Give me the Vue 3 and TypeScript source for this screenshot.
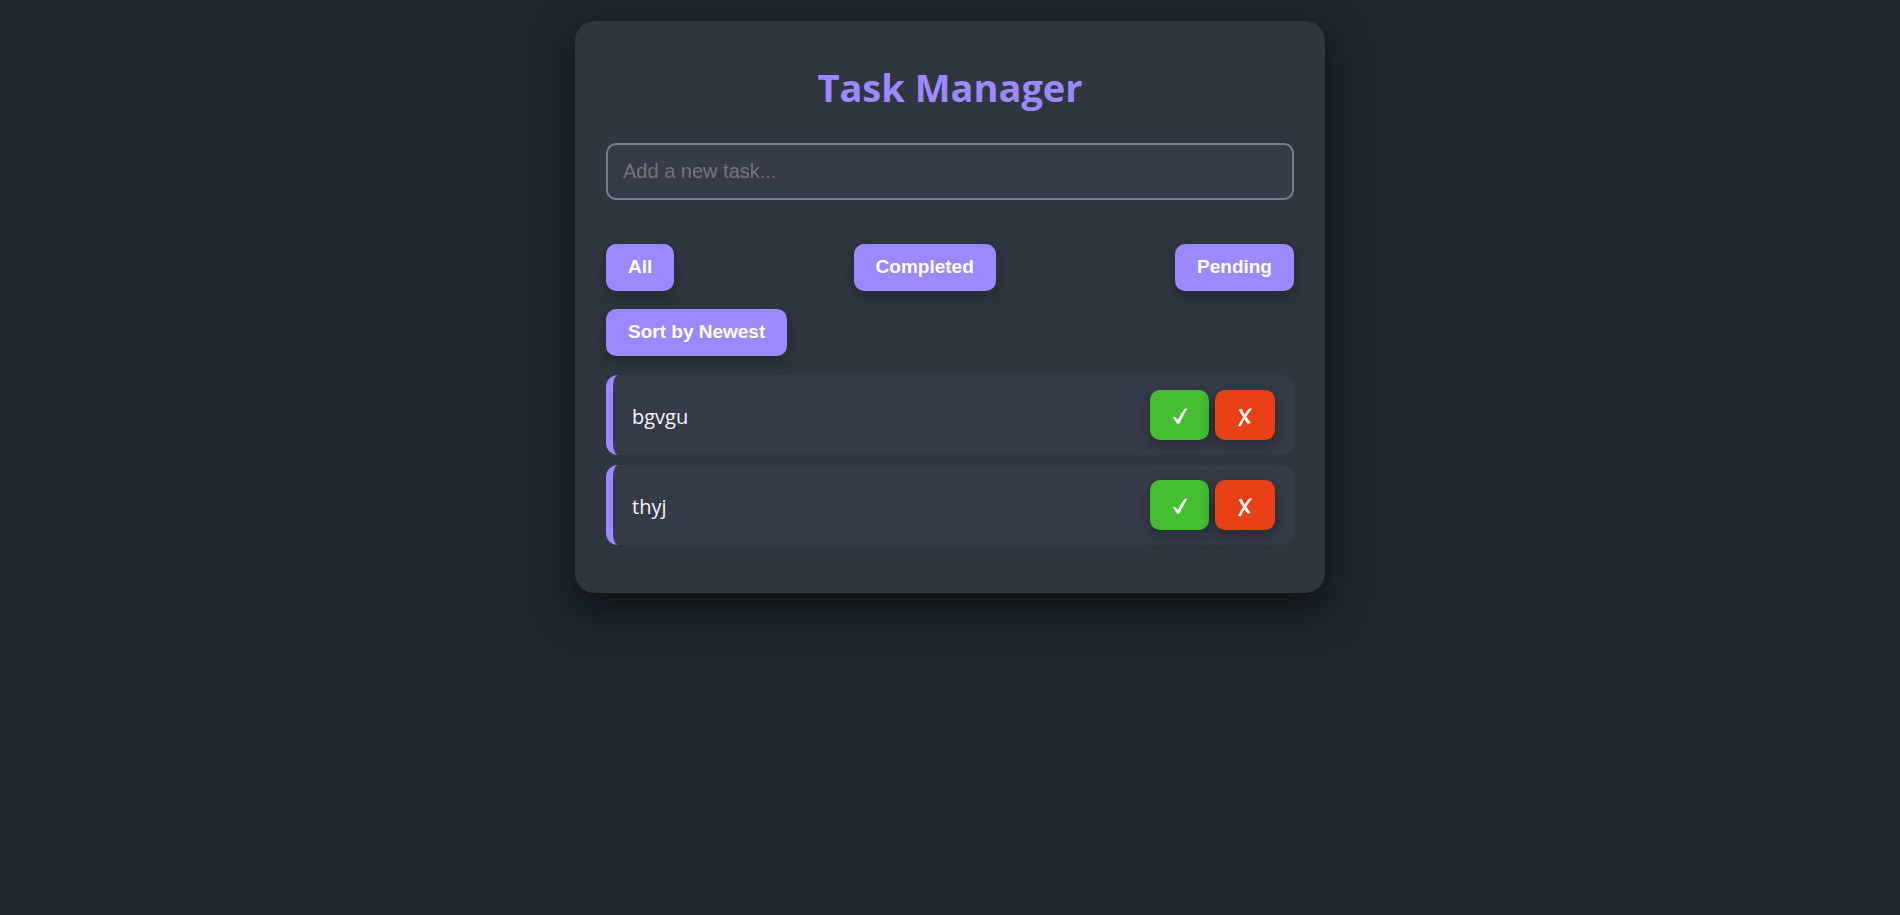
<script setup lang="ts">
import { computed, ref } from 'vue'

interface Task {
  id: number
  text: string
  done: boolean
}

type Filter = 'all' | 'completed' | 'pending'

const tasks = ref<Task[]>([
  { id: 1, text: 'bgvgu', done: false },
  { id: 2, text: 'thyj', done: false },
])
const draft = ref('')
const filter = ref<Filter>('all')
const newestFirst = ref(false)

const filters: { key: Filter; label: string }[] = [
  { key: 'all', label: 'All' },
  { key: 'completed', label: 'Completed' },
  { key: 'pending', label: 'Pending' },
]

const visibleTasks = computed(() => {
  const list = tasks.value.filter(
    (t) => filter.value === 'all' || t.done === (filter.value === 'completed'),
  )
  return newestFirst.value ? list.reverse() : list
})

function addTask() {
  const text = draft.value.trim()
  if (!text) return
  tasks.value.push({ id: Date.now(), text, done: false })
  draft.value = ''
}

function removeTask(id: number) {
  tasks.value = tasks.value.filter((t) => t.id !== id)
}
</script>

<template>
  <div class="page">
    <main class="card">
      <h1 class="title">Task Manager</h1>
      <form @submit.prevent="addTask">
        <input
          v-model="draft"
          class="task-input"
          type="text"
          aria-label="Add a new task"
          placeholder="Add a new task..."
        />
      </form>
      <div class="filters">
        <button v-for="f in filters" :key="f.key" type="button" class="btn" @click="filter = f.key">
          {{ f.label }}
        </button>
      </div>
      <button type="button" class="btn sort" @click="newestFirst = !newestFirst">Sort by Newest</button>
      <ul class="list">
        <li v-for="task in visibleTasks" :key="task.id" class="item">
          <span class="label" :class="{ done: task.done }">{{ task.text }}</span>
          <div class="actions">
            <button type="button" class="action complete" aria-label="Complete" @click="task.done = !task.done">
              <svg class="icon" viewBox="0 0 20 20" aria-hidden="true">
                <path d="M2.8 10.6 Q4 9.4 5.4 10.2 Q6.8 11.4 7.8 13 Q10.6 6.6 14.6 2 L17.4 1.5 Q13.2 8.2 9.6 16.400 L7 16.800 Q5.200 13.200 2.800 10.600 Z" />
              </svg>
            </button>
            <button type="button" class="action remove" aria-label="Delete" @click="removeTask(task.id)">
              <svg class="icon" viewBox="0 0 20 20" aria-hidden="true">
                <path d="M3.700 2.700 L6.700 1.700 Q8 4.600 9.700 7.400 Q12 4.200 14.200 1.600 L17.200 1.600 Q14 5.400 11.300 9.600 Q13.300 12.800 15.700 15.800 L12.900 17.100 Q10.900 14.800 9.500 12.200 Q7.500 15.500 6 18.900 L3 19.300 Q5.200 14.400 8.100 9.900 Q5.600 6.400 3.700 2.700 Z" />
              </svg>
            </button>
          </div>
        </li>
      </ul>
    </main>
  </div>
</template>

<style>
body {
  background: #1e272e;
}
</style>

<style scoped>
.page {
  box-sizing: border-box;
  min-height: 100vh;
  padding: 21px 0;
  background: #1e272e;
}
.card {
  box-sizing: border-box;
  max-width: 750px;
  margin: 0 auto;
  padding: 39px 31px 48px;
  border-radius: 20px;
  background: #2f3640;
  box-shadow: 0 14px 40px rgba(0, 0, 0, 0.6);
  color: #f5f6fa;
  font-family: "Open Sans", "Noto Sans", sans-serif;
}
.title {
  margin: 0 0 29px;
  color: #9c88ff;
  font-size: 38px;
  line-height: 54px;
  text-align: center;
}
.task-input {
  display: block;
  box-sizing: border-box;
  width: 100%;
  height: 57px;
  padding: 0 15px;
  border: 2px solid #718093;
  border-radius: 10px;
  background: #353b48;
  color: #f5f6fa;
  font-family: "Liberation Sans", Arial, sans-serif;
  font-size: 20px;
}
.task-input::placeholder {
  color: #757575;
}
.filters {
  display: flex;
  justify-content: space-between;
  margin: 44px 0 18px;
}
.btn {
  height: 47px;
  padding: 0 22px 2px;
  font-family: "Liberation Sans", Arial, sans-serif;
  font-size: 19px;
  font-weight: 700;
  background: #9c88ff;
}
.btn,
.action {
  border: 0;
  border-radius: 10px;
  color: #fff;
  box-shadow: 0 5px 15px rgba(0, 0, 0, 0.3);
  cursor: pointer;
}
.sort {
  display: block;
}
.list {
  display: flex;
  flex-direction: column;
  gap: 10px;
  margin: 19px 0 0;
  padding: 0;
  list-style: none;
}
.item {
  display: flex;
  align-items: center;
  justify-content: space-between;
  padding: 15px 19px;
  border-left: 7px solid #9c88ff;
  border-radius: 12px;
  background: #353b48;
}
.label {
  padding-top: 3px;
  font-size: 20px;
  line-height: 28px;
}
.done {
  text-decoration: line-through;
}
.actions {
  display: flex;
  gap: 6px;
}
.action {
  display: flex;
  align-items: center;
  justify-content: center;
  width: 60px;
  height: 50px;
  padding: 3px 0 0;
}
.complete {
  width: 59px;
  background: #44bd32;
}
.remove {
  background: #e84118;
}
.icon {
  width: 20px;
  height: 20px;
  fill: #fff;
}
</style>
